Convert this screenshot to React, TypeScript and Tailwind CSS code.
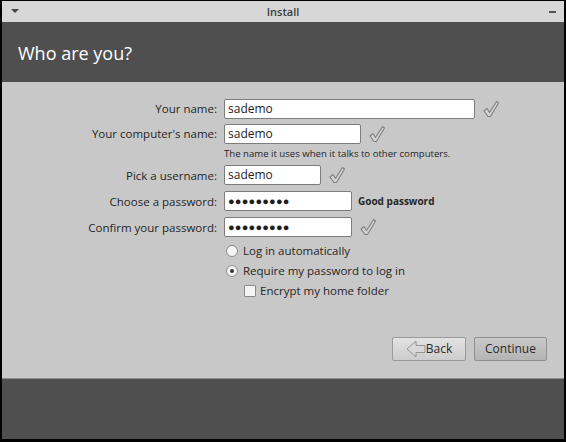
import type { ReactNode } from 'react'

const font = { fontFamily: '"Open Sans", "Noto Sans", sans-serif' }

function Check() {
  return (
    <svg width="18" height="19" viewBox="0 0 18 19" className="ml-[7px] shrink-0">
      <path
        d="M2 11 L5 8.5 L7.5 12.5 L14.5 1.5 L16.5 3 L8.5 16.5 L6 16.5 Z"
        fill="#d2d2d2"
        stroke="#808080"
        strokeWidth="1.1"
        strokeLinejoin="round"
      />
    </svg>
  )
}

function Field({ label, value, width, after }: { label: string; value: ReactNode; width: string; after?: ReactNode }) {
  return (
    <div className="flex items-center">
      <div className="w-[222px] pr-[7px] text-right text-[11.5px] text-[#262626]">{label}</div>
      <div
        className={`${width} flex h-[20px] items-center rounded-[2px] border border-[#7d7d7d] bg-white pl-[3px] text-[12px] text-[#1e1e1e]`}
      >
        {value}
      </div>
      {after}
    </div>
  )
}

const dots = <span className="text-[11px] tracking-[0.2px] text-[#1e1e1e]">●●●●●●●●●</span>

export default function App() {
  return (
    <div style={font} className="h-[442px] w-[566px] overflow-hidden border-x-2 border-b-2 border-t border-black bg-black">
      {/* title bar */}
      <div className="relative flex h-[21px] items-center justify-center bg-[#d7d7d7]">
        <span className="absolute left-[9px] top-[8px] h-0 w-0 border-x-[4px] border-t-[4px] border-x-transparent border-t-[#444]" />
        <span className="pt-[1px] text-[11px] font-semibold text-[#3c3c3c]">Install</span>
        <span className="absolute right-[8px] top-[10px] h-[2px] w-[7px] bg-[#555]" />
      </div>

      {/* header */}
      <div className="flex h-[60px] items-center bg-[#4f4f4f] pl-[16px]">
        <h1 className="pt-[2px] text-[18px] text-white">Who are you?</h1>
      </div>

      {/* content */}
      <div className="flex h-[297px] flex-col border-b border-[#8c8c8c] bg-[#c8c8c8] pt-[17px]">
        <div className="flex flex-col">
          <Field label="Your name:" value="sademo" width="w-[251px]" after={<Check />} />
          <div className="mt-[5px]">
            <Field label="Your computer's name:" value="sademo" width="w-[137px]" after={<Check />} />
          </div>
          <div className="pl-[222px] pt-[3px] text-[9.6px] text-[#262626]">The name it uses when it talks to other computers.</div>
          <div className="mt-[4px]">
            <Field label="Pick a username:" value="sademo" width="w-[97px]" after={<Check />} />
          </div>
          <div className="mt-[6px]">
            <Field
              label="Choose a password:"
              value={dots}
              width="w-[128px]"
              after={<span className="ml-[6px] text-[10px] font-bold text-[#262626]">Good password</span>}
            />
          </div>
          <div className="mt-[6px]">
            <Field label="Confirm your password:" value={dots} width="w-[128px]" after={<Check />} />
          </div>

          <div className="mt-[7px] flex flex-col gap-[7px] pl-[224px] text-[11.5px] text-[#262626]">
            <label className="flex h-[13px] items-center gap-[5px]">
              <span className="h-[12px] w-[12px] rounded-full border border-[#8a8a8a] bg-[#f4f4f4]" />
              Log in automatically
            </label>
            <label className="flex h-[13px] items-center gap-[5px]">
              <span className="flex h-[12px] w-[12px] items-center justify-center rounded-full border border-[#8a8a8a] bg-[#f4f4f4]">
                <span className="h-[4px] w-[4px] rounded-full bg-[#333]" />
              </span>
              Require my password to log in
            </label>
            <label className="ml-[18px] flex h-[13px] items-center gap-[4px]">
              <span className="h-[12px] w-[12px] rounded-[1px] border border-[#8a8a8a] bg-[#f4f4f4]" />
              Encrypt my home folder
            </label>
          </div>
        </div>

        <div className="mt-auto mb-[17px] flex justify-end gap-[8px] pr-[17px]">
          <button className="flex h-[24px] w-[74px] items-center justify-center rounded-[2px] border border-[#9a9a9a] bg-gradient-to-b from-[#e2e2e2] to-[#cdcdcd] text-[12px] text-[#2b2b2b]">
            <svg width="20" height="18" viewBox="0 0 20 18">
              <path d="M1 9 L10 1 L10 5.5 L19 5.5 L19 12.5 L10 12.5 L10 17 Z" fill="#d9d9d9" stroke="#959595" strokeWidth="1" strokeLinejoin="round" />
            </svg>
            Back
          </button>
          <button className="h-[24px] w-[73px] rounded-[2px] border border-[#8f8f8f] bg-gradient-to-b from-[#c9c9c9] to-[#b4b4b4] text-[12px] text-[#2b2b2b]">
            Continue
          </button>
        </div>
      </div>

      {/* footer */}
      <div className="h-[60px] bg-[#4f4f4f]" />
    </div>
  )
}
